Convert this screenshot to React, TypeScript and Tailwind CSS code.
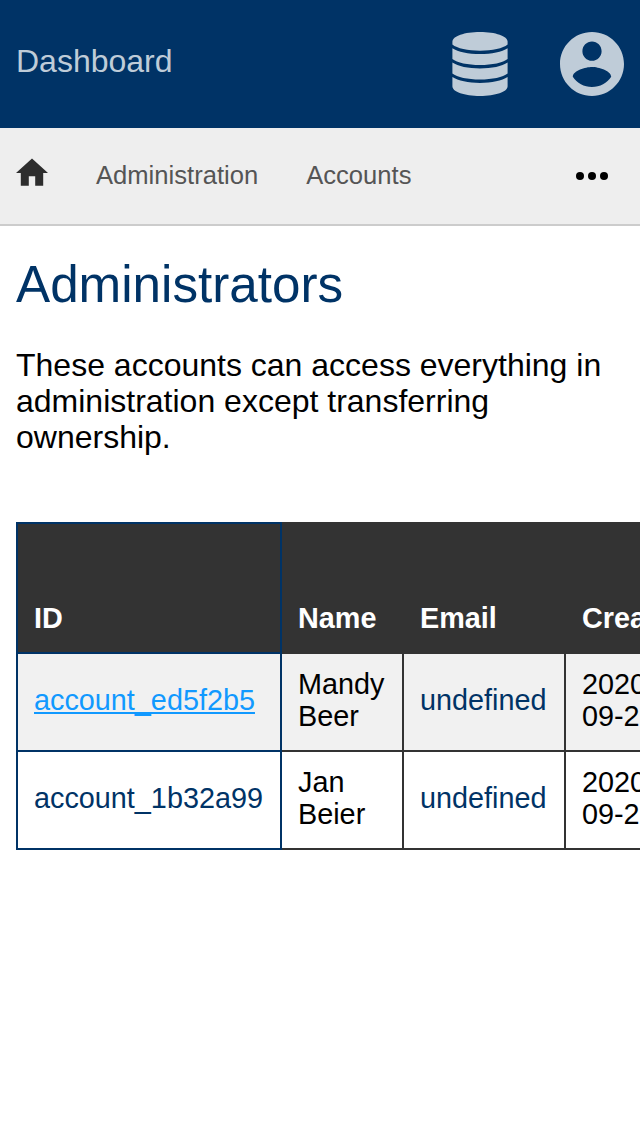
import React from "react";

const rows = [
  { id: "account_ed5f2b5", name: "Mandy Beer", created: "2020-09-21", active: true },
  { id: "account_1b32a99", name: "Jan Beier", created: "2020-09-21", active: false },
];

export default function App() {
  return (
    <div className="h-[1136px] w-[640px] overflow-hidden bg-white font-['Liberation_Sans',sans-serif] text-black">
      <header className="flex h-32 items-center justify-between bg-[#003366] px-4 text-[#bfccd8]">
        <a className="-mt-1.5 text-[32px] leading-9">Dashboard</a>
        <div className="flex items-center gap-[52px]">
          <svg className="h-16 w-14" viewBox="0 0 56 64" fill="currentColor">
            <path d="M28 0C43.5 0 55.6 4.1 55.6 9.7V12.6C51 16.5 40.2 18.7 28 18.7S5 16.5.4 12.6V9.7C.4 4.1 12.5 0 28 0Z" />
            <path d="M.4 16.2C6 20 16.2 22.1 28 22.1s22-2.1 27.6-5.9V27C51 30.8 40.2 33 28 33S5 30.8.4 27Z" />
            <path d="M.4 30.6C6 34.4 16.2 36.5 28 36.5s22-2.1 27.6-5.9V41.4C51 45.2 40.2 47.4 28 47.4S5 45.2.4 41.4Z" />
            <path d="M.4 45C6 48.8 16.2 50.9 28 50.9s22-2.1 27.6-5.9V54.3C55.6 59.9 43.5 64 28 64S.4 59.9.4 54.3Z" />
          </svg>
          <svg className="size-16" viewBox="2 2 20 20" fill="currentColor">
            <path d="M12 2C6.48 2 2 6.48 2 12s4.48 10 10 10 10-4.48 10-10S17.52 2 12 2zm0 3c1.66 0 3 1.34 3 3s-1.34 3-3 3-3-1.34-3-3 1.34-3 3-3zm0 14.2c-2.5 0-4.71-1.28-6-3.22.03-1.99 4-3.08 6-3.08 1.99 0 5.97 1.09 6 3.08-1.29 1.94-3.5 3.22-6 3.22z" />
          </svg>
        </div>
      </header>
      <nav className="flex h-[98px] items-center border-b-2 border-[#ccc] bg-[#eee] px-4 text-[25.6px] text-[#555]">
        <svg className="-mt-1.5 size-8" viewBox="2 2 20 20" fill="#2d2d2d">
          <path d="M10 20v-6h4v6h5v-8h3L12 3 2 12h3v8z" />
        </svg>
        <a className="mb-0.5 ml-12">Administration</a>
        <a className="mb-0.5 ml-12">Accounts</a>
        <svg className="mr-4 ml-auto size-8" viewBox="0 0 32 32" fill="#000">
          <circle cx="4" cy="16" r="4" />
          <circle cx="16" cy="16" r="4" />
          <circle cx="28" cy="16" r="4" />
        </svg>
      </nav>
      <main className="px-4 pt-[30px]">
        <h1 className="text-[51.2px] leading-[57px] text-[#003366]">Administrators</h1>
        <p className="mt-[34px] text-[32px] leading-9">These accounts can access everything in administration except transferring ownership.</p>
        <table className="mt-[67px] w-[762px] table-fixed border-collapse text-[28.8px] leading-8">
          <colgroup>
            <col className="w-[264px]" />
            <col className="w-[122px]" />
            <col className="w-[162px]" />
            <col className="w-[212px]" />
          </colgroup>
          <thead>
            <tr className="h-[130px] bg-[#333] text-left align-bottom text-white">
              <th className="border-2 border-[#003366] px-4 pb-[18px]">ID</th>
              <th className="border-2 border-[#333] px-4 pb-[18px]">Name</th>
              <th className="border-2 border-[#333] px-4 pb-[18px]">Email</th>
              <th className="border-2 border-[#333] px-4 pb-[18px]">Created</th>
            </tr>
          </thead>
          <tbody>
            {rows.map((r) => (
              <tr key={r.id} className="h-[98px] odd:bg-[#f1f1f1]">
                <td className="border-2 border-[#003366] px-4 pb-1 text-[#003366]">
                  <a className={r.active ? "text-[#1199ff] underline" : ""}>{r.id}</a>
                </td>
                <td className="border-2 border-[#333] px-4 pb-1">{r.name}</td>
                <td className="border-2 border-[#333] px-4 pb-1 text-[#003366]">undefined</td>
                <td className="border-2 border-[#333] px-4 pb-1">
                  <span className="block w-20">{r.created}</span>
                </td>
              </tr>
            ))}
          </tbody>
        </table>
      </main>
    </div>
  );
}
